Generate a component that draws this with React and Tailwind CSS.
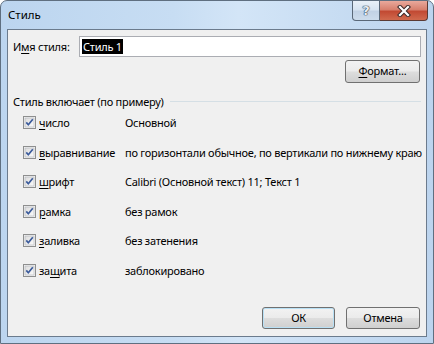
import React from "react";

const U = ({ children }) => <span className="underline underline-offset-[2px] decoration-1">{children}</span>;

function Check() {
  return (
    <svg width="13" height="13" viewBox="0 0 13 13" className="shrink-0">
      <defs>
        <linearGradient id="cbg" x1="0" y1="0" x2="1" y2="1">
          <stop offset="0" stopColor="#dcdcdc" />
          <stop offset="1" stopColor="#fbfbfb" />
        </linearGradient>
      </defs>
      <rect x="0.5" y="0.5" width="12" height="12" fill="#f4f4f4" stroke="#8e8f8f" />
      <rect x="2" y="2" width="9" height="9" fill="url(#cbg)" stroke="#aeb3b9" strokeWidth="0.6" />
      <path d="M3.3 6.4 L5.3 8.8 L9.8 3.2" fill="none" stroke="#3c5c9c" strokeWidth="1.7" strokeLinejoin="round" />
    </svg>
  );
}

const rows = [
  [<><U>ч</U>исло</>, "Основной"],
  [<><U>в</U>ыравнивание</>, "по горизонтали обычное, по вертикали по нижнему краю"],
  [<><U>ш</U>рифт</>, "Calibri (Основной текст) 11; Текст 1"],
  [<><U>р</U>амка</>, "без рамок"],
  [<><U>з</U>аливка</>, "без затенения"],
  [<>за<U>щ</U>ита</>, "заблокировано"],
];

const btn =
  "flex items-center justify-center rounded-[3px] border border-[#707070] bg-[linear-gradient(#f2f2f2_0%,#ebebeb_48%,#dddddd_52%,#cfcfcf_100%)] text-[11px] text-black";

export default function App() {
  return (
    <div
      className="w-[434px] h-[344px] flex flex-col rounded-t-[7px] border border-[#5f6f80] bg-[linear-gradient(90deg,#bcd5ef_0%,#c7ddf3_40%,#d3e5f7_55%,#bcd4ee_100%)] overflow-hidden"
      style={{ fontFamily: '"Noto Sans", "Open Sans", sans-serif' }}
    >
      <div className="h-[28px] flex items-start justify-between pl-[7px] pr-[5px] shrink-0">
        <div className="h-[28px] flex items-center text-[11.5px] text-black leading-none">Стиль</div>
        <div className="flex">
          <div className="w-[28px] h-[20px] rounded-bl-[4px] border border-t-0 border-[#5a6878] bg-[linear-gradient(#e9f0f8_0%,#d8e4f1_45%,#c2d2e5_55%,#cddcec_100%)] flex items-center justify-center">
            <span className="text-[13px] font-bold leading-none text-[#e8eef5] [text-shadow:0_0_1px_#25364c,0_0_1px_#25364c,0_0_1px_#25364c]" style={{ fontFamily: '"DejaVu Sans", sans-serif' }}>?</span>
          </div>
          <div className="w-[48px] h-[20px] rounded-br-[4px] border border-t-0 border-l-0 border-[#5a3a34] bg-[linear-gradient(#e9a99c_0%,#d7806e_45%,#c24a33_55%,#d06a4e_100%)] flex items-center justify-center">
            <svg width="16" height="12" viewBox="0 0 16 12">
              <path d="M4 2 L12 10 M12 2 L4 10" stroke="#3a2a2a" strokeWidth="4.2" strokeLinecap="square" />
              <path d="M4 2 L12 10 M12 2 L4 10" stroke="#ffffff" strokeWidth="2.2" strokeLinecap="square" />
            </svg>
          </div>
        </div>
      </div>
      <div className="mx-[6px] mb-[6px] flex-1 border border-[#6b7b8d] bg-[#f0f0f0] flex flex-col text-[11px] tracking-[-0.25px] text-black">
        <div className="flex items-center pt-[6px] pl-[5px] pr-[5px]">
          <div className="w-[66px] leading-none">И<U>м</U>я стиля:</div>
          <div className="flex-1 h-[21px] border border-[#abadb3] bg-white flex items-center pl-[2px]">
            <span className="bg-black text-white leading-[15px] px-[1px]">Стиль 1</span>
          </div>
        </div>
        <div className="flex justify-end pr-[6px] mt-[3px]">
          <div className={`${btn} w-[75px] h-[23px]`}><U>Ф</U>ормат...</div>
        </div>
        <div className="mt-[12px] h-[13px] flex items-center pl-[5px] pr-[5px]">
          <span className="leading-none whitespace-nowrap">Стиль включает (по примеру)</span>
          <div className="flex-1 ml-[6px] h-px bg-[#d5dfe5]" />
        </div>
        <div className="flex flex-col">
          {rows.map(([label, value], i) => (
            <div key={i} className="h-[29.5px] flex items-center pl-[15px]">
              <Check />
              <div className="ml-[3px] w-[86px] shrink-0 leading-none">{label}</div>
              <div className="leading-none whitespace-nowrap">{value}</div>
            </div>
          ))}
        </div>
        <div className="flex-1" />
        <div className="flex justify-end gap-[11px] pr-[6px] pb-[7px]">
          <div className={`${btn} w-[73px] h-[22px] border-[#3c7fb1] shadow-[inset_0_0_0_1px_#b8e0f5]`}>ОК</div>
          <div className={`${btn} w-[74px] h-[22px]`}>Отмена</div>
        </div>
      </div>
    </div>
  );
}
